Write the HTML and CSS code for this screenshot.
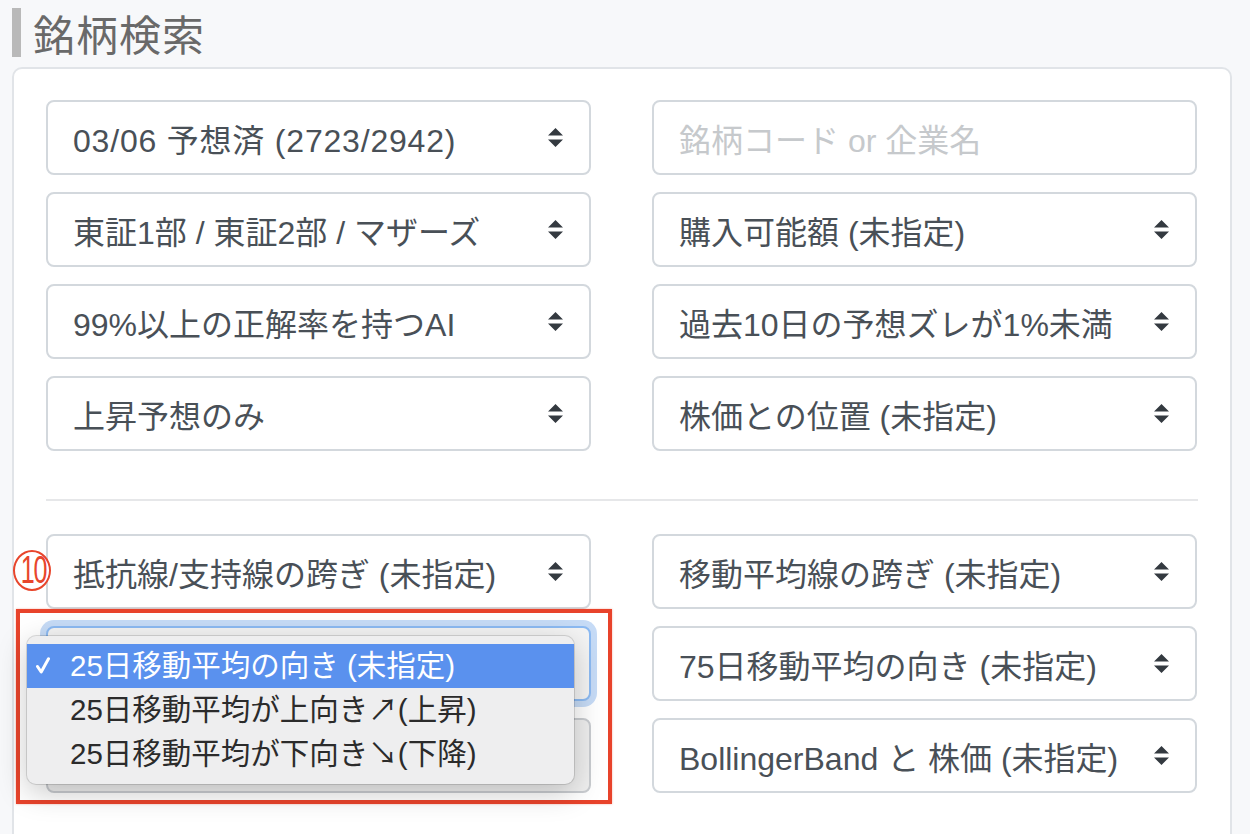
FILE: index.html
```html
<!DOCTYPE html>
<html lang="ja">
<head>
<meta charset="utf-8">
<title>銘柄検索</title>
<link rel="stylesheet" href="styles.css">
</head>
<body>
<div class="page">
  <h2 class="title">銘柄検索</h2>
  <div class="card">
    <div class="grid">
      <div class="select"><span class="val wide">03/06 予想済 (2723/2942)</span><svg class="caret" viewBox="0 0 4 5" preserveAspectRatio="none"><path d="M2 0L0 2h4zm0 5L0 3h4z"/></svg></div>
      <div class="select input"><span class="ph">銘柄コード or 企業名</span></div>
      <div class="select"><span class="val">東証1部 / 東証2部 / マザーズ</span><svg class="caret" viewBox="0 0 4 5" preserveAspectRatio="none"><path d="M2 0L0 2h4zm0 5L0 3h4z"/></svg></div>
      <div class="select"><span class="val">購入可能額 (未指定)</span><svg class="caret" viewBox="0 0 4 5" preserveAspectRatio="none"><path d="M2 0L0 2h4zm0 5L0 3h4z"/></svg></div>
      <div class="select"><span class="val">99%以上の正解率を持つAI</span><svg class="caret" viewBox="0 0 4 5" preserveAspectRatio="none"><path d="M2 0L0 2h4zm0 5L0 3h4z"/></svg></div>
      <div class="select"><span class="val">過去10日の予想ズレが1%未満</span><svg class="caret" viewBox="0 0 4 5" preserveAspectRatio="none"><path d="M2 0L0 2h4zm0 5L0 3h4z"/></svg></div>
      <div class="select"><span class="val">上昇予想のみ</span><svg class="caret" viewBox="0 0 4 5" preserveAspectRatio="none"><path d="M2 0L0 2h4zm0 5L0 3h4z"/></svg></div>
      <div class="select"><span class="val">株価との位置 (未指定)</span><svg class="caret" viewBox="0 0 4 5" preserveAspectRatio="none"><path d="M2 0L0 2h4zm0 5L0 3h4z"/></svg></div>
    </div>
    <div class="divider"></div>
    <div class="grid">
      <div class="select"><span class="badge"><span class="badge-num">10</span></span><span class="val">抵抗線/支持線の跨ぎ (未指定)</span><svg class="caret" viewBox="0 0 4 5" preserveAspectRatio="none"><path d="M2 0L0 2h4zm0 5L0 3h4z"/></svg></div>
      <div class="select"><span class="val">移動平均線の跨ぎ (未指定)</span><svg class="caret" viewBox="0 0 4 5" preserveAspectRatio="none"><path d="M2 0L0 2h4zm0 5L0 3h4z"/></svg></div>
      <div class="select focus">
        <span class="val covered">25日移動平均の向き (未指定)</span><svg class="caret" viewBox="0 0 4 5" preserveAspectRatio="none"><path d="M2 0L0 2h4zm0 5L0 3h4z"/></svg>
        <div class="annot-box"></div>
        <ul class="menu">
          <li class="sel"><svg class="check" viewBox="0 0 14 17"><path d="M1.5 9.5L5.2 15L12.5 1.8"/></svg>25日移動平均の向き (未指定)</li>
          <li>25日移動平均が上向き↗(上昇)</li>
          <li>25日移動平均が下向き↘(下降)</li>
        </ul>
      </div>
      <div class="select"><span class="val">75日移動平均の向き (未指定)</span><svg class="caret" viewBox="0 0 4 5" preserveAspectRatio="none"><path d="M2 0L0 2h4zm0 5L0 3h4z"/></svg></div>
      <div class="select dim"><span class="val covered">ゴールデンクロス (未指定)</span><svg class="caret" viewBox="0 0 4 5" preserveAspectRatio="none"><path d="M2 0L0 2h4zm0 5L0 3h4z"/></svg></div>
      <div class="select"><span class="val">BollingerBand と 株価 (未指定)</span><svg class="caret" viewBox="0 0 4 5" preserveAspectRatio="none"><path d="M2 0L0 2h4zm0 5L0 3h4z"/></svg></div>
    </div>
  </div>
</div>
</body>
</html>
```
FILE: styles.css
```css
* { box-sizing: border-box; }
html, body { margin: 0; padding: 0; }
body {
  background: #f7f8fa;
  font-family: "Liberation Sans", "Noto Sans CJK JP", sans-serif;
  color: #495057;
  overflow: hidden;
  height: 834px;
}
.page {
  padding: 8px 18px 0 12px;
}
.title {
  margin: 0 0 10px 0;
  height: 49px;
  border-left: 9px solid #b9b9b9;
  padding-left: 12px;
  font-family: "Noto Sans CJK JP", sans-serif;
  font-weight: 400;
  font-size: 42px;
  line-height: 49px;
  color: #696969;
  letter-spacing: 1px;
}
.card {
  background: #fff;
  border: 2px solid #e1e4e8;
  border-radius: 10px;
  padding: 31px 32px 60px 32px;
  min-height: 900px;
}
.grid {
  display: grid;
  grid-template-columns: 545px 545px;
  column-gap: 61px;
  row-gap: 17px;
}
.select {
  position: relative;
  height: 75px;
  border: 2px solid #d3d8dd;
  border-radius: 8px;
  background: #fff;
  display: flex;
  align-items: center;
  padding: 0 26px 0 25px;
  font-size: 32px;
  white-space: nowrap;
}
.select .val { flex: 1; }
.select .wide { letter-spacing: 0.8px; }
.select .covered { visibility: hidden; }
.select .ph { color: #c6c9cc; }
.caret {
  width: 15px;
  height: 19px;
  fill: #343a40;
  flex: none;
}
.divider {
  height: 2px;
  background: #e6e7e9;
  margin: 48px 0 33px 0;
}
.badge {
  position: absolute;
  left: -35px;
  top: 14px;
  width: 38px;
  height: 41px;
  border: 2.5px solid #e8462c;
  border-radius: 50%;
  background: #fff;
}
.badge-num {
  position: absolute;
  left: 0;
  right: 0;
  top: 1px;
  text-align: center;
  color: #e8462c;
  font-family: "Liberation Sans", sans-serif;
  font-size: 38px;
  line-height: 34px;
  letter-spacing: -2px;
  transform: scaleX(0.66);
}
.focus {
  border-color: #8cbaf2;
  box-shadow: 0 0 0 6px #c6dbf6;
  background: #f4f4f4;
}
.dim { background: #efefef; border-color: #c9ccd0; }
.annot-box {
  position: absolute;
  left: -32px;
  top: -19px;
  width: 596px;
  height: 195px;
  border: 4px solid #e8432b;
  box-shadow: 0 0 2px rgba(232,67,43,0.4);
  pointer-events: none;
  z-index: 2;
}
.menu {
  position: absolute;
  left: -21px;
  top: 8px;
  width: 547px;
  height: 148px;
  margin: 0;
  padding: 8px 0;
  list-style: none;
  background: #eeeeef;
  border-radius: 9px;
  box-shadow: 0 0 0 1px rgba(0,0,0,0.13), 0 8px 30px rgba(0,0,0,0.22);
  z-index: 3;
}
.menu li {
  position: relative;
  height: 44px;
  line-height: 44px;
  padding-left: 43px;
  font-size: 29.5px;
  color: #2b2b2b;
}
.menu li.sel {
  background: #5a91ee;
  color: #fff;
}
.check {
  position: absolute;
  left: 9px;
  top: 13px;
  width: 14px;
  height: 17px;
  fill: none;
  stroke: #fff;
  stroke-width: 3;
  stroke-linecap: round;
  stroke-linejoin: round;
}
```
